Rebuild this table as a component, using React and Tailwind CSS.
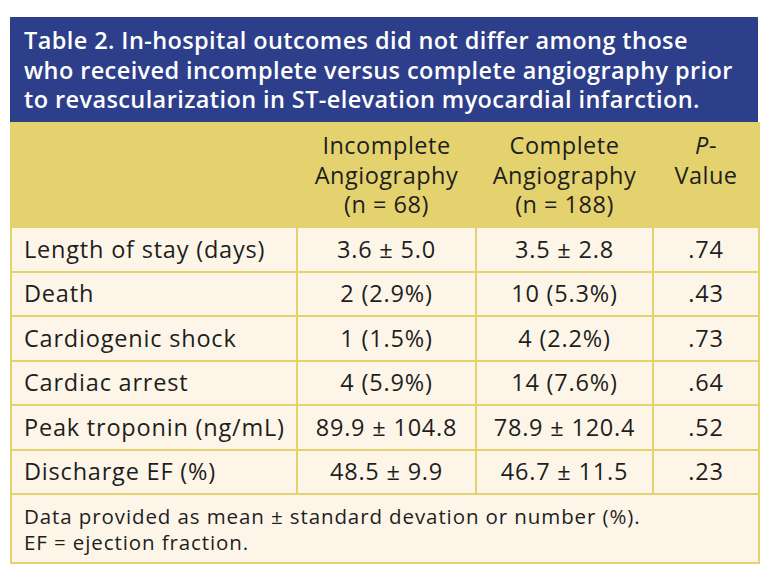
import React from "react";

const rows = [
  ["Length of stay (days)", "3.6 ± 5.0", "3.5 ± 2.8", ".74"],
  ["Death", "2 (2.9%)", "10 (5.3%)", ".43"],
  ["Cardiogenic shock", "1 (1.5%)", "4 (2.2%)", ".73"],
  ["Cardiac arrest", "4 (5.9%)", "14 (7.6%)", ".64"],
  ["Peak troponin (ng/mL)", "89.9 ± 104.8", "78.9 ± 120.4", ".52"],
  ["Discharge EF (%)", "48.5 ± 9.9", "46.7 ± 11.5", ".23"],
];

export default function App() {
  return (
    <div className="w-[778px] h-[582px] bg-white pt-[17px] pl-[10px]" style={{ fontFamily: "'Open Sans', 'Liberation Sans', sans-serif" }}>
      <div className="w-[748px]">
        <div className="bg-[#2d3e8a] text-white font-semibold text-[23.5px] tracking-[0.4px] leading-[29.5px] pl-[14px] pt-[9px] pb-[8px] h-[105px] whitespace-nowrap">
          Table 2. In-hospital outcomes did not differ among those
          <br />
          who received incomplete versus complete angiography prior
          <br />
          to revascularization in ST-elevation myocardial infarction.
        </div>
        <table className="w-[748px] table-fixed border-collapse text-[#1e1e1e]">
          <colgroup>
            <col className="w-[286px]" />
            <col className="w-[179px]" />
            <col className="w-[177px]" />
            <col className="w-[106px]" />
          </colgroup>
          <thead>
            <tr className="bg-[#e4d26f] h-[105px] text-[23.5px] tracking-[0.5px] leading-[29.5px]">
              <th className="border-2 border-[#e4d26f] border-t-0"></th>
              <th className="border-2 border-[#e4d26f] border-t-0 font-medium text-center align-top pt-[9px] whitespace-nowrap">
                Incomplete<br />Angiography<br />(n = 68)
              </th>
              <th className="border-2 border-[#e4d26f] border-t-0 font-medium text-center align-top pt-[9px] whitespace-nowrap">
                Complete<br />Angiography<br />(n = 188)
              </th>
              <th className="border-2 border-[#e4d26f] border-t-0 font-medium text-center align-top pt-[9px]">
                <i>P</i>-<br />Value
              </th>
            </tr>
          </thead>
          <tbody className="bg-[#fdf6e8] text-[23.5px] tracking-[0.8px]">
            {rows.map((r, i) => (
              <tr key={i} className="h-[44.5px]">
                <td className="border-2 border-[#e4d26f] pl-[12px] whitespace-nowrap">{r[0]}</td>
                <td className="border-2 border-[#e4d26f] text-center whitespace-nowrap">{r[1]}</td>
                <td className="border-2 border-[#e4d26f] text-center whitespace-nowrap">{r[2]}</td>
                <td className="border-2 border-[#e4d26f] text-center whitespace-nowrap">{r[3]}</td>
              </tr>
            ))}
            <tr className="h-[69px]">
              <td colSpan={4} className="border-2 border-[#e4d26f] pl-[12px] align-top pt-[8px] text-[20.5px] tracking-[0.9px] leading-[26px] whitespace-nowrap">
                Data provided as mean ± standard devation or number (%).
                <br />
                EF = ejection fraction.
              </td>
            </tr>
          </tbody>
        </table>
      </div>
    </div>
  );
}
